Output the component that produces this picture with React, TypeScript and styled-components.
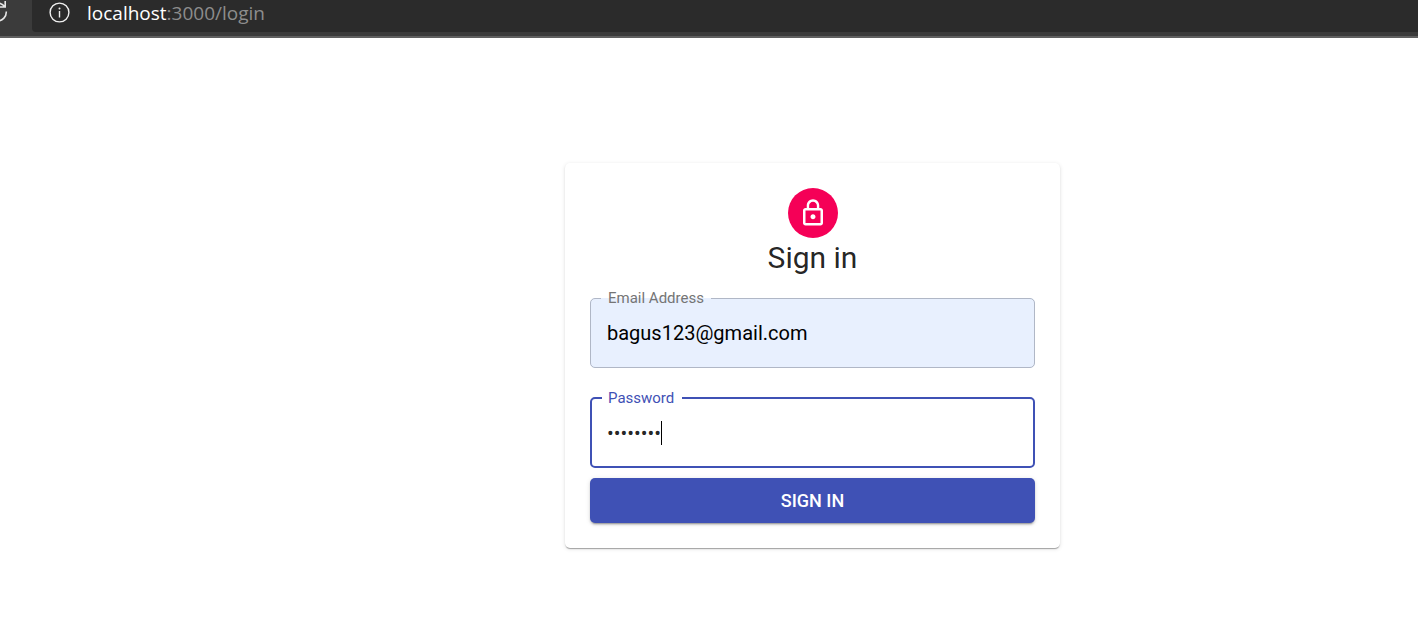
import React from "react";
import styled, { createGlobalStyle } from "styled-components";

const GlobalStyle = createGlobalStyle`
  *, *::before, *::after { box-sizing: border-box; }
  body {
    margin: 0;
    background: #fff;
    color: rgba(0, 0, 0, 0.87);
    font-family: Roboto, "Liberation Sans", sans-serif;
  }
`;

const BrowserBar = styled.header`
  display: flex;
  height: 38px;
  padding-bottom: 4px;
  background: #3b3b3b;
  border-bottom: 2px solid #606060;
  overflow: hidden;
`;

const ReloadButton = styled.button`
  flex: none;
  display: flex;
  width: 32px;
  padding: 0;
  border: 0;
  background: none;
`;

const AddressBar = styled.div`
  flex: 1;
  display: flex;
  align-items: flex-start;
  gap: 17px;
  padding: 0 17px;
  background: #2b2b2b;
  border-bottom-left-radius: 4px;
`;

const InfoIcon = styled.svg`
  flex: none;
  margin-top: 2px;
`;

const Address = styled.span`
  color: #8d8d8d;
  font: 19px/26px "Open Sans", "Noto Sans", sans-serif;
`;

const Host = styled.span`
  color: #fff;
`;

const Page = styled.main`
  display: flex;
  justify-content: center;
  padding: 125px 0 76px 207px;
`;

const Card = styled.section`
  display: flex;
  flex-direction: column;
  width: 100%;
  max-width: 495px;
  padding: 25px;
  border-radius: 5px;
  background: #fff;
  box-shadow: 0 2px 1px -1px rgba(0, 0, 0, 0.2), 0 1px 1px rgba(0, 0, 0, 0.14),
    0 1px 4px rgba(0, 0, 0, 0.12);
`;

const Avatar = styled.div`
  align-self: center;
  display: flex;
  align-items: center;
  justify-content: center;
  width: 50px;
  height: 50px;
  border-radius: 50%;
  background: #f50057;
`;

const Title = styled.h1`
  margin: 0;
  font-size: 30px;
  font-weight: 400;
  line-height: 40px;
  text-align: center;
`;

const Form = styled.form`
  display: flex;
  flex-direction: column;
  gap: 10px;
  margin-top: 20px;
`;

const Fields = styled.div`
  display: flex;
  flex-direction: column;
  gap: 30px;
`;

const Field = styled.div`
  position: relative;
`;

const Input = styled.input<{ $filled?: boolean }>`
  display: block;
  width: 100%;
  height: 70px;
  padding: 0 17px;
  border: 0;
  border-radius: 5px;
  outline: 0;
  background: ${(p) => (p.$filled ? "#e8f0fe" : "transparent")};
  color: ${(p) => (p.$filled ? "#000" : "rgba(0, 0, 0, 0.87)")};
  font: 20px/24px Roboto, "Liberation Sans", sans-serif;
`;

const Label = styled.label<{ $active?: boolean }>`
  position: absolute;
  top: -9px;
  left: 18px;
  z-index: 1;
  color: ${(p) => (p.$active ? "#3f51b5" : "#757575")};
  font-size: 15px;
  line-height: 18px;
`;

const Outline = styled.fieldset<{ $active?: boolean }>`
  position: absolute;
  inset: -8px 0 0;
  min-width: 0;
  margin: 0;
  padding: 0 10px;
  border: ${(p) => (p.$active ? "2px solid #3f51b5" : "1px solid #b0b7c6")};
  border-radius: 5px;
  pointer-events: none;
`;

const Notch = styled.legend<{ $active?: boolean }>`
  height: ${(p) => (p.$active ? 16 : 17)}px;
  padding: 0 7px;
  font-size: 15px;
  line-height: 16px;

  span { visibility: hidden; }
`;

const Caret = styled.span`
  position: absolute;
  top: 23px;
  left: 71px;
  width: 1px;
  height: 24px;
  background: #000;
`;

const SubmitButton = styled.button`
  height: 45px;
  border: 0;
  border-radius: 5px;
  background: #3f51b5;
  color: #fff;
  font: 500 18px/30px Roboto, "Liberation Sans", sans-serif;
  text-transform: uppercase;
  box-shadow: 0 3px 1px -2px rgba(0, 0, 0, 0.2), 0 2px 2px rgba(0, 0, 0, 0.14),
    0 1px 5px rgba(0, 0, 0, 0.12);
`;

type TextFieldProps = {
  id: string;
  label: string;
  type: string;
  value: string;
  active?: boolean;
  filled?: boolean;
};

function TextField({ id, label, type, value, active, filled }: TextFieldProps) {
  return (
    <Field>
      <Label htmlFor={id} $active={active}>{label}</Label>
      <Input id={id} type={type} defaultValue={value} $filled={filled} />
      <Outline aria-hidden="true" $active={active}>
        <Notch $active={active}><span>{label}</span></Notch>
      </Outline>
      {active && <Caret />}
    </Field>
  );
}

export default function App() {
  return (
    <>
      <GlobalStyle />
      <BrowserBar>
        <ReloadButton aria-label="Reload">
          <svg width="32" height="32" viewBox="0 0 32 32" fill="none" stroke="#e6e6e6" strokeWidth="1.6">
            <path d="M0 7h5.2V1M5 7A9.6 9.6 0 0 0-3 3M6.3 11.5A9 9 0 0 1-2.5 21" />
          </svg>
        </ReloadButton>
        <AddressBar>
          <InfoIcon width="21" height="21" viewBox="0 0 21 21" fill="none" stroke="#f0f0f0" strokeWidth="1.4">
            <circle cx="10.5" cy="10.5" r="9.4" />
            <path d="M10.5 9v6.5" />
            <circle cx="10.5" cy="6.4" r="1" fill="#f0f0f0" stroke="none" />
          </InfoIcon>
          <Address><Host>localhost</Host>:3000/login</Address>
        </AddressBar>
      </BrowserBar>
      <Page>
        <Card>
          <Avatar>
            <svg width="30" height="30" viewBox="0 0 24 24" fill="#fff" aria-hidden="true">
              <path d="M12 17c1.1 0 2-.9 2-2s-.9-2-2-2-2 .9-2 2 .9 2 2 2zm6-9h-1V6c0-2.76-2.24-5-5-5S7 3.24 7 6v2H6c-1.1 0-2 .9-2 2v10c0 1.1.9 2 2 2h12c1.1 0 2-.9 2-2V10c0-1.1-.9-2-2-2zM8.9 6c0-1.71 1.39-3.1 3.1-3.1s3.1 1.39 3.1 3.1v2H8.9V6zM18 20H6V10h12v10z" />
            </svg>
          </Avatar>
          <Title>Sign in</Title>
          <Form onSubmit={(e) => e.preventDefault()}>
            <Fields>
              <TextField id="email" label="Email Address" type="email" value="bagus123@gmail.com" filled />
              <TextField id="password" label="Password" type="password" value="bagus123" active />
            </Fields>
            <SubmitButton type="submit">Sign in</SubmitButton>
          </Form>
        </Card>
      </Page>
    </>
  );
}
